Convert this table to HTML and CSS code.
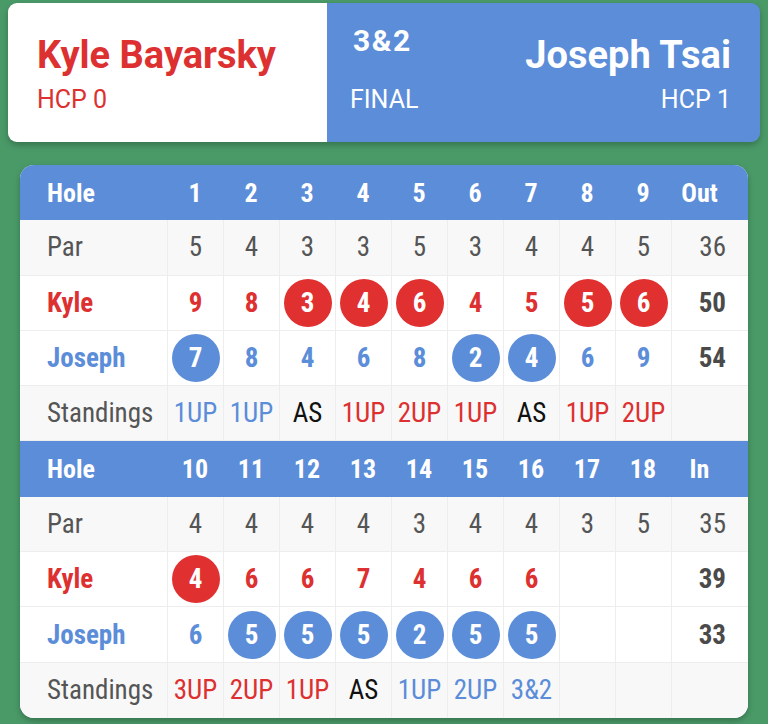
FILE: index.html
```html
<!DOCTYPE html>
<html>
<head>
<meta charset="utf-8">
<link rel="stylesheet" href="styles.css">
</head>
<body>
<div class="match">
  <div class="player player-a">
    <div class="name">Kyle Bayarsky</div>
    <div class="hcp">HCP 0</div>
  </div>
  <div class="player-b">
    <div class="result">
      <div class="score">3&amp;2</div>
      <div class="status">FINAL</div>
    </div>
    <div class="player player-right">
      <div class="name">Joseph Tsai</div>
      <div class="hcp">HCP 1</div>
    </div>
  </div>
</div>

<div class="card">
  <div class="row head">
    <div class="lbl">Hole</div><div>1</div><div>2</div><div>3</div><div>4</div><div>5</div><div>6</div><div>7</div><div>8</div><div>9</div><div class="tot">Out</div>
  </div>
  <div class="row par">
    <div class="lbl">Par</div><div>5</div><div>4</div><div>3</div><div>3</div><div>5</div><div>3</div><div>4</div><div>4</div><div>5</div><div class="tot">36</div>
  </div>
  <div class="row kyle">
    <div class="lbl">Kyle</div><div>9</div><div>8</div><div><span class="dot">3</span></div><div><span class="dot">4</span></div><div><span class="dot">6</span></div><div>4</div><div>5</div><div><span class="dot">5</span></div><div><span class="dot">6</span></div><div class="tot">50</div>
  </div>
  <div class="row joe">
    <div class="lbl">Joseph</div><div><span class="dot">7</span></div><div>8</div><div>4</div><div>6</div><div>8</div><div><span class="dot">2</span></div><div><span class="dot">4</span></div><div>6</div><div>9</div><div class="tot">54</div>
  </div>
  <div class="row stand">
    <div class="lbl">Standings</div><div class="b">1UP</div><div class="b">1UP</div><div class="as">AS</div><div class="r">1UP</div><div class="r">2UP</div><div class="r">1UP</div><div class="as">AS</div><div class="r">1UP</div><div class="r">2UP</div><div class="tot"></div>
  </div>
  <div class="row head">
    <div class="lbl">Hole</div><div>10</div><div>11</div><div>12</div><div>13</div><div>14</div><div>15</div><div>16</div><div>17</div><div>18</div><div class="tot">In</div>
  </div>
  <div class="row par">
    <div class="lbl">Par</div><div>4</div><div>4</div><div>4</div><div>4</div><div>3</div><div>4</div><div>4</div><div>3</div><div>5</div><div class="tot">35</div>
  </div>
  <div class="row kyle">
    <div class="lbl">Kyle</div><div><span class="dot">4</span></div><div>6</div><div>6</div><div>7</div><div>4</div><div>6</div><div>6</div><div></div><div></div><div class="tot">39</div>
  </div>
  <div class="row joe">
    <div class="lbl">Joseph</div><div>6</div><div><span class="dot">5</span></div><div><span class="dot">5</span></div><div><span class="dot">5</span></div><div><span class="dot">2</span></div><div><span class="dot">5</span></div><div><span class="dot">5</span></div><div></div><div></div><div class="tot">33</div>
  </div>
  <div class="row stand last">
    <div class="lbl">Standings</div><div class="r">3UP</div><div class="r">2UP</div><div class="r">1UP</div><div class="as">AS</div><div class="b">1UP</div><div class="b">2UP</div><div class="b">3&amp;2</div><div></div><div></div><div class="tot"></div>
  </div>
</div>
</body>
</html>
```

FILE: styles.css
```css
html, body {
  margin: 0;
  padding: 0;
}
body {
  background: #4a9a68;
  width: 768px;
  height: 724px;
  overflow: hidden;
  font-family: Roboto, "Liberation Sans", sans-serif;
  padding-top: 3px;
  box-sizing: border-box;
}
.match {
  margin: 0 8px;
  height: 139px;
  display: flex;
  border-radius: 9px;
  overflow: hidden;
  box-shadow: 0 3px 6px rgba(0,0,0,0.25);
}
.player-a {
  width: 319px;
  background: #fff;
  color: #dd3030;
  padding: 30px 0 0 29px;
  box-sizing: border-box;
}
.player-b {
  flex: 1;
  background: #5b8dd9;
  color: #fff;
  display: flex;
  justify-content: space-between;
  padding: 0 29px 0 23px;
}
.name {
  font-size: 38px;
  font-weight: 700;
  line-height: 44px;
}
.hcp {
  font-size: 25px;
  line-height: 30px;
  margin-top: 8px;
}
.player-right {
  text-align: right;
  padding-top: 30px;
}
.result {
  padding-top: 21px;
}
.score {
  font-size: 30px;
  font-weight: 700;
  line-height: 34px;
  letter-spacing: 1.5px;
  padding-left: 3px;
}
.status {
  font-size: 25px;
  line-height: 30px;
  margin-top: 27px;
}

.card {
  margin: 23px 20px 0;
  background: #fff;
  border-radius: 14px;
  overflow: hidden;
  box-shadow: 0 3px 6px rgba(0,0,0,0.25);
  font-family: "Roboto Condensed", Roboto, "Liberation Sans", sans-serif;
  font-stretch: condensed;
}
.row {
  display: grid;
  grid-template-columns: 147px repeat(9, 56px) 1fr;
  height: 55.3px;
  font-size: 27px;
}
.row > div {
  display: flex;
  align-items: center;
  justify-content: center;
  border-left: 1px solid #ededed;
  border-bottom: 1px solid #ededed;
  box-sizing: border-box;
}
.row > .lbl {
  justify-content: flex-start;
  padding-left: 27px;
  border-left: none;
}
.row > .tot {
  justify-content: flex-end;
  padding-right: 22px;
  font-weight: 700;
  color: #4a4a4a;
}
.row.par > .tot {
  font-weight: 400;
  color: #555;
}
.row.last > div {
  border-bottom: none;
}
.head {
  background: #5b8dd9;
  color: #fff;
  font-weight: 700;
  font-size: 26px;
}
.head > div {
  border-left: none !important;
  border-bottom: none !important;
}
.row.head > .tot {
  justify-content: center;
  padding-right: 20px;
  color: #fff;
}
.par, .stand {
  background: #f8f8f8;
  color: #555;
}
.kyle {
  color: #dd3030;
  font-weight: 700;
}
.joe {
  color: #5b8dd9;
  font-weight: 700;
}
.dot {
  width: 48px;
  height: 48px;
  border-radius: 50%;
  color: #fff;
  display: flex;
  align-items: center;
  justify-content: center;
  flex: none;
}
.kyle .dot {
  background: #e03030;
}
.joe .dot {
  background: #5b8dd9;
}
.stand .b {
  color: #5b8dd9;
}
.stand .r {
  color: #dd3030;
}
.stand .as {
  color: #111;
}
```
